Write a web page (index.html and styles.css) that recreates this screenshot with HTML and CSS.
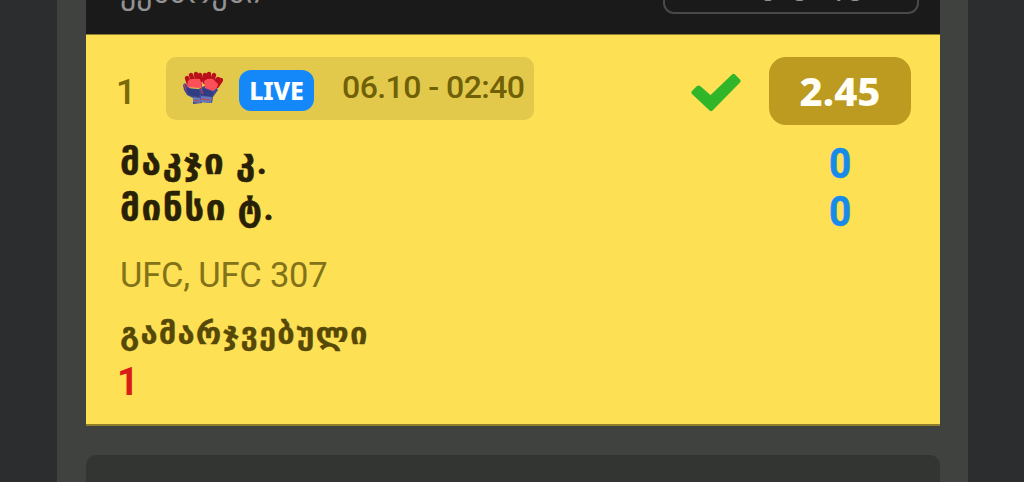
FILE: index.html
```
<!DOCTYPE html>
<html lang="ka">
<head>
<meta charset="utf-8">
<title>Bet slip</title>
<link rel="stylesheet" href="styles.css">
</head>
<body>
<main class="panel">
  <header class="top">
    <div class="top-label">ექსპრესი</div>
    <div class="top-button">გაყიდვა</div>
  </header>
  <section class="bet">
    <div class="head">
      <span class="index">1</span>
      <div class="chip">
        <svg class="gloves" viewBox="0 0 40 36">
          <path fill="#42498f" d="M0 14l2-2 3 3 5 6 11-6 12 1 2 3-5 7-1 6-10-1v1l-9 1v-6l-6-3-3-5z"/>
          <path fill="none" stroke="#b9101c" stroke-width="4.4" stroke-linecap="round" d="M4 7l2 6M8 4l2 6M13 3l1 6M17 4l1 5M22 4v7M26 3v7M31 4l-2 7M35 8l-4 5M38 9l-4 6"/>
          <path fill="#fb5059" d="M5 10q2-3 12-2l2 7-3 2-12-1zM21 10q3-3 9-2l5 5q0 4-5 7l-8-3z"/>
          <path fill="#303d83" d="M3 17l12 1 2 4-1 4-10-2zM20 17l10 4-1 5-11-2z"/>
          <path fill="#6477b6" d="M10 26l7 1v5l-7-1zM18 25l11 1-1 6-11-1z"/>
          <path fill="none" stroke="#d53c50" d="M1 13l2 6M19 11l-1 7 2 5M11 29l5 1m2-2l9 1"/>
        </svg>
        <span class="live">LIVE</span>
        <time class="time">06.10 - 02:40</time>
      </div>
      <svg class="check" viewBox="0 0 50 38"><path d="M3 18.5L7.5 14 19.5 24.5 42.5 2.5 47 7 20 34.5z"/></svg>
      <span class="odds">2.45</span>
    </div>
    <div class="match">
      <div class="names"><div class="name">მაკჯი კ.</div><div class="name">მინსი ტ.</div></div>
      <div class="scores"><span>0</span><span>0</span></div>
    </div>
    <div class="league">UFC, UFC 307</div>
    <div class="market">გამარჯვებული</div>
    <div class="pick">1</div>
  </section>
  <div class="next"></div>
</main>
</body>
</html>
```
FILE: styles.css
```
* { box-sizing: border-box; }
html, body { height: 100%; overflow: hidden; }
body { margin: 0; background: #2c2d2f; font-family: Roboto, "DejaVu Sans", sans-serif; }
.panel { width: 911px; height: 482px; margin-left: 57px; padding: 0 28px 0 29px; background: #40423f; overflow: hidden; }
.top { height: 34px; padding: 0 21px 0 34px; display: flex; justify-content: space-between; align-items: flex-end; background: #1a1a1a; overflow: hidden; }
.top-label { height: 34px; line-height: 34px; margin-bottom: 25px; font-size: 32px; letter-spacing: 0.1px; color: #929292; }
.top-button { width: 256px; height: 60px; margin-bottom: 20px; padding-left: 55px; border: 2px solid #494949; border-radius: 11px; color: #929292; font-size: 30px; line-height: 56px; text-align: center; }
.bet { height: 392px; padding: 22px 29px 0 34px; background: #fde054; border: solid #8f7e2c; border-width: 1px 0 2px; }
.head { height: 69px; display: flex; align-items: flex-start; }
.index { width: 46px; padding-top: 14px; color: #7a6a0b; font: 500 35px/44px Roboto, sans-serif; text-indent: -4px; }
.chip { width: 368px; height: 63px; padding-left: 17px; display: flex; border-radius: 10px; background: #e2c94c; }
.gloves { width: 40px; height: 36px; margin-top: 14px; }
.live { width: 75px; height: 41px; margin: 13px 0 0 16px; border-radius: 12px; background: #1488f8; color: #fff; font: 800 25px/41px "Noto Sans", sans-serif; text-align: center; letter-spacing: -0.2px; }
.time { margin: 9px 0 0 28px; color: #706006; font: 500 32px/42px Roboto, sans-serif; letter-spacing: -0.55px; white-space: nowrap; }
.check { width: 50px; height: 38px; margin: 17px 28px 0 auto; }
.check path { fill: #31b529; stroke: #31b529; stroke-width: 5; stroke-linejoin: round; }
.odds { width: 142px; height: 68px; border-radius: 17px; background: #bc9b20; color: #fffff5; font: 800 40px/67px "Noto Sans", sans-serif; text-align: center; }
.match { height: 118px; padding-top: 12px; display: flex; justify-content: space-between; }
.name { height: 46px; line-height: 49px; font-weight: 700; font-size: 35px; letter-spacing: 1.6px; -webkit-text-stroke: 0.5px #292106; color: #292106; white-space: nowrap; }
.scores { width: 142px; display: grid; grid-template-rows: 48px 48px; text-align: center; color: #168be9; font: 700 42px/52px Roboto, sans-serif; -webkit-text-stroke: 0.6px #168be9; }
.scores span { transform: scaleX(0.92); }
.league { height: 58px; line-height: 56px; color: #827219; font-size: 34.5px; font-weight: 400; letter-spacing: -0.2px; margin-top: 3px; }
.market { height: 58px; line-height: 58px; color: #564806; font-size: 31px; letter-spacing: 1.15px; font-weight: 700; -webkit-text-stroke: 0.3px #564806; white-space: nowrap; width: max-content; }
.pick { color: #d91c16; font: 700 38px/38px Roboto, sans-serif; text-indent: -3px; }
.next { height: 60px; margin-top: 29px; background: #333533; border-radius: 10px; }
```
